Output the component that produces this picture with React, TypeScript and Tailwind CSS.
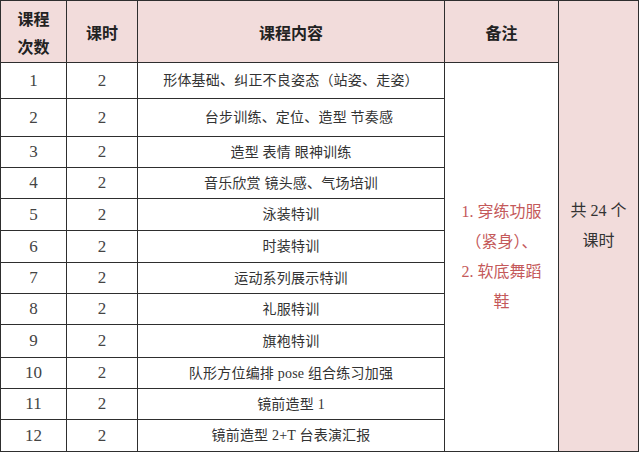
import React from 'react';

const rows = [
  { n: 1, h: 'h-[36px]', text: '形体基础、纠正不良姿态（站姿、走姿）', shift: false },
  { n: 2, h: 'h-[38px]', text: '台步训练、定位、造型 节奏感', shift: true },
  { n: 3, h: 'h-[31px]', text: '造型 表情 眼神训练', shift: false },
  { n: 4, h: 'h-[31px]', text: '音乐欣赏 镜头感、气场培训', shift: false },
  { n: 5, h: 'h-[32px]', text: '泳装特训', shift: false },
  { n: 6, h: 'h-[32px]', text: '时装特训', shift: false },
  { n: 7, h: 'h-[31px]', text: '运动系列展示特训', shift: false },
  { n: 8, h: 'h-[31px]', text: '礼服特训', shift: false },
  { n: 9, h: 'h-[33px]', text: '旗袍特训', shift: false },
  { n: 10, h: 'h-[31px]', text: '队形方位编排 pose 组合练习加强', shift: false },
  { n: 11, h: 'h-[31px]', text: '镜前造型 1', shift: false },
  { n: 12, h: 'h-[32px]', text: '镜前造型 2+T 台表演汇报', shift: false },
];

const serif = "font-['Liberation_Serif','Noto_Sans_CJK_SC',serif]";
const sans = "font-['Noto_Sans_CJK_SC',sans-serif]";
const cell = 'border border-[#2e2e2e] p-0 text-center align-middle';
const head = `${cell} ${sans} text-[16px] font-bold text-[#222]`;

export default function App() {
  return (
    <div className="w-[640px] h-[453px] bg-white">
      <table className="table-fixed border-collapse w-[638px] text-[#333]">
        <colgroup>
          <col className="w-[66px]" />
          <col className="w-[71px]" />
          <col className="w-[307px]" />
          <col className="w-[114px]" />
          <col className="w-[80px]" />
        </colgroup>
        <tbody>
          <tr className="h-[62px] bg-[#f2dcdb]">
            <td className={`${head} leading-[28px]`}>
              课程
              <br />
              次数
            </td>
            <td className={head}>课时</td>
            <td className={head}>课程内容</td>
            <td className={head}>备注</td>
            <td
              rowSpan={13}
              className={`${cell} bg-[#f2dcdb] ${serif} text-[16px] leading-[30px] text-[#333]`}
            >
              共 24 个
              <br />
              课时
            </td>
          </tr>
          {rows.map((r, i) => (
            <tr key={r.n} className={r.h}>
              <td className={`${cell} ${serif} text-[17px] text-[#444]`}>{r.n}</td>
              <td className={`${cell} ${serif} text-[17px] text-[#444]`}>2</td>
              <td className={`${cell} ${serif} text-[14px] tracking-[0.2px]`}>
                <span className={r.shift ? 'pl-4' : ''}>{r.text}</span>
              </td>
              {i === 0 && (
                <td
                  rowSpan={12}
                  className={`${cell} ${serif} text-[16px] leading-[30px] text-[#c4595a] px-2`}
                >
                  1. 穿练功服
                  <br />
                  （紧身）、
                  <br />
                  2. 软底舞蹈
                  <br />
                  鞋
                </td>
              )}
            </tr>
          ))}
        </tbody>
      </table>
    </div>
  );
}
